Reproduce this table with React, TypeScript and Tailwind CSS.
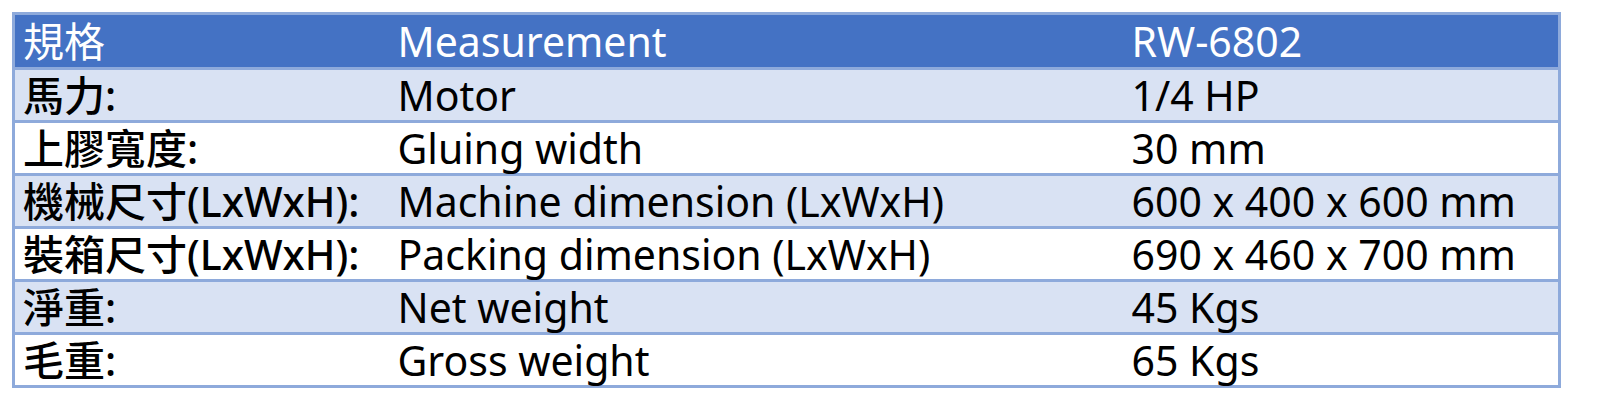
const rows = [
  { zh: "馬力:", en: "Motor", value: "1/4 HP" },
  { zh: "上膠寬度:", en: "Gluing width", value: "30 mm" },
  { zh: "機械尺寸(LxWxH):", en: "Machine dimension (LxWxH)", value: "600 x 400 x 600 mm" },
  { zh: "裝箱尺寸(LxWxH):", en: "Packing dimension (LxWxH)", value: "690 x 460 x 700 mm" },
  { zh: "淨重:", en: "Net weight", value: "45 Kgs" },
  { zh: "毛重:", en: "Gross weight", value: "65 Kgs" },
];

export default function App() {
  return (
    <div
      className="w-[1600px] h-[400px] bg-white pt-[12px] pl-[12px]"
      style={{ fontFamily: '"Noto Sans", "Noto Sans CJK TC", sans-serif' }}
    >
      <table className="w-[1549px] border-collapse border-[3px] border-[#8eaadb] text-[41px] leading-none">
        <colgroup>
          <col className="w-[376px]" />
          <col className="w-[734px]" />
          <col />
        </colgroup>
        <thead>
          <tr className="h-[55px] bg-[#4472c4] text-white">
            <th className="pl-[8px] text-left font-normal">規格</th>
            <th className="pl-[8px] text-left font-normal">Measurement</th>
            <th className="pl-[8px] text-left font-normal">RW-6802</th>
          </tr>
        </thead>
        <tbody>
          {rows.map((r, i) => (
            <tr
              key={r.zh}
              className={`h-[53px] border-t-[3px] border-[#8eaadb] text-black ${i % 2 === 0 ? "bg-[#d9e2f3]" : "bg-white"}`}
            >
              <td className="pl-[8px] font-medium whitespace-nowrap">{r.zh}</td>
              <td className="pl-[8px] whitespace-nowrap">{r.en}</td>
              <td className="pl-[8px] whitespace-nowrap">{r.value}</td>
            </tr>
          ))}
        </tbody>
      </table>
    </div>
  );
}
